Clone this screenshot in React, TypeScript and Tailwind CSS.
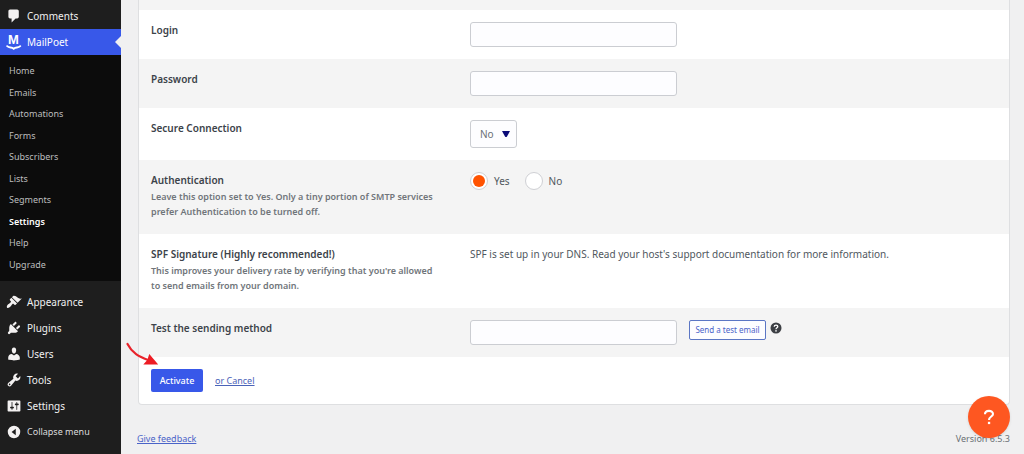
import type { ReactNode } from "react";

const icons = {
  comments:
    "M5 2h9c1.1 0 2 .9 2 2v7c0 1.1-.9 2-2 2h-2l-5 5v-5H5c-1.1 0-2-.9-2-2V4c0-1.1.9-2 2-2z",
  appearance:
    "M14.48 11.06L7.41 3.99l1.5-1.5c.5-.56 2.3-.47 3.51.32 1.21.8 1.43 1.28 2.91 2.1 1.18.64 2.45 1.26 4.45.85zm-.71.71L6.7 4.7 4.93 6.47c-.39.39-.39 1.02 0 1.41l1.06 1.06c.39.39.39 1.03 0 1.42-.6.6-1.43 1.11-2.21 1.69-.35.26-.7.53-1.01.84C1.43 14.23.4 16.08 1.4 17.07c.99 1 2.84-.03 4.18-1.36.31-.31.58-.66.85-1.02.57-.78 1.08-1.61 1.69-2.21.39-.39 1.02-.39 1.41 0l1.06 1.06c.39.39 1.02.39 1.41 0z",
  plugins:
    "M13.11 4.36L9.87 7.6 8 5.73l3.24-3.24c.35-.34 1.05-.2 1.56.32.52.51.66 1.21.31 1.55zm-8 1.77l.91-1.12 9.01 9.01-1.19.84c-.71.71-2.63 1.16-3.82 1.16H6.14L4.9 17.26c-.59.59-1.54.59-2.12 0-.59-.58-.59-1.53 0-2.12l1.24-1.24v-3.88c0-1.13.4-3.19 1.09-3.89zm7.26 3.97l3.24-3.24c.34-.35 1.04-.21 1.55.31.52.51.66 1.21.31 1.55l-3.24 3.25z",
  users:
    "M10 9.25c-2.27 0-2.73-3.44-2.73-3.44C7 4.02 7.82 2 9.97 2c2.16 0 2.98 2.02 2.71 3.81 0 0-.41 3.44-2.68 3.44zm0 2.57L12.72 10c2.39 0 4.52 2.33 4.52 4.53v2.49s-3.65 1.13-7.24 1.13c-3.65 0-7.24-1.13-7.24-1.13v-2.49c0-2.25 1.94-4.48 4.47-4.48z",
  tools:
    "M16.68 9.77c-1.34 1.34-3.3 1.67-4.95.99l-5.41 6.52c-.99.99-2.59.99-3.58 0s-.99-2.59 0-3.57l6.52-5.42c-.68-1.65-.35-3.61.99-4.95 1.28-1.28 3.12-1.62 4.72-1.06l-2.89 2.89 2.82 2.82 2.86-2.87c.53 1.58.18 3.39-1.08 4.65zM3.81 16.21c.4.39 1.04.39 1.43 0 .4-.4.4-1.04 0-1.43-.39-.4-1.03-.4-1.43 0-.39.39-.39 1.03 0 1.43z",
  settings:
    "M18 16V4c0-.55-.45-1-1-1H3c-.55 0-1 .45-1 1v12c0 .55.45 1 1 1h14c.55 0 1-.45 1-1zM8 11h1c.55 0 1 .45 1 1s-.45 1-1 1H8v1.5c0 .28-.22.5-.5.5s-.5-.22-.5-.5V13H6c-.55 0-1-.45-1-1s.45-1 1-1h1V5.5c0-.28.22-.5.5-.5s.5.22.5.5V11zm5-2h-1c-.55 0-1-.45-1-1s.45-1 1-1h1V5.5c0-.28.22-.5.5-.5s.5.22.5.5V7h1c.55 0 1 .45 1 1s-.45 1-1 1h-1v5.5c0 .28-.22.5-.5.5s-.5-.22-.5-.5V9z",
  collapse:
    "M10 2.2a7.8 7.8 0 1 0 0 15.6 7.8 7.8 0 0 0 0-15.6zM12.2 5.8v8.4L7 10z",
};

const lowerMenu: { label: string; icon: keyof typeof icons }[] = [
  { label: "Appearance", icon: "appearance" },
  { label: "Plugins", icon: "plugins" },
  { label: "Users", icon: "users" },
  { label: "Tools", icon: "tools" },
  { label: "Settings", icon: "settings" },
];

const submenu = [
  "Home",
  "Emails",
  "Automations",
  "Forms",
  "Subscribers",
  "Lists",
  "Segments",
  "Settings",
  "Help",
  "Upgrade",
];

function MenuIcon({ name }: { name: keyof typeof icons }) {
  return (
    <svg viewBox="0 0 20 20" className="size-4 shrink-0 fill-[#f3f1f1]" fillRule="evenodd" aria-hidden="true">
      <path d={icons[name]} />
    </svg>
  );
}

const menuRow = "flex h-[26px] w-full items-center gap-[5px] pl-[6px] text-[#f0f0f1]";

function Sidebar() {
  return (
    <nav className="w-[121px] shrink-0 bg-[#1e1e1e] pt-[3px] text-[10px]">
      <a href="#comments" className={menuRow}>
        <MenuIcon name="comments" />
        Comments
      </a>
      <a href="#mailpoet" className="relative flex h-[26px] items-center gap-[5px] bg-[#3858e9] pl-[6px] text-white">
        <svg viewBox="0 0 16 20" className="h-5 w-4 shrink-0" aria-hidden="true">
          <text x="7.5" y="11.7" textAnchor="middle" fontFamily="Liberation Sans, sans-serif" fontWeight="700" fontSize="13" fill="#fff">
            M
          </text>
          <path d="M1.2 14.2C3.4 16.4 5.5 14.6 7.7 16.7C10 14.6 12 16.4 14.2 14.2" fill="none" stroke="#fff" strokeWidth="1.9" strokeLinecap="round" />
        </svg>
        MailPoet
        <span className="absolute top-[7px] right-0 border-y-6 border-r-6 border-y-transparent border-r-[#f0f0f1]" />
      </a>
      <div className="flex h-[226px] flex-col bg-[#0c0c0c] pt-[5px] pb-[6px] pl-[9px] text-[9px] text-[#bcbdbe]">
        {submenu.map((item) => (
          <a
            key={item}
            href={`#${item.toLowerCase()}`}
            className={item === "Settings" ? "flex flex-1 items-center font-semibold text-white" : "flex flex-1 items-center"}
          >
            {item}
          </a>
        ))}
      </div>
      <div className="pt-2">
        {lowerMenu.map(({ label, icon }) => (
          <a key={label} href={`#menu-${icon}`} className={menuRow}>
            <MenuIcon name={icon} />
            {label}
          </a>
        ))}
        <button type="button" className="flex h-[26px] w-full items-center gap-[5px] pl-[6px] text-[9px] text-[#dcdcdd]">
          <MenuIcon name="collapse" />
          Collapse menu
        </button>
      </div>
    </nav>
  );
}

type RowProps = { label: string; htmlFor?: string; help?: string; shaded?: boolean; children: ReactNode };

function Row({ label, htmlFor, help, shaded, children }: RowProps) {
  return (
    <div className={shaded ? "flex bg-[#f4f4f4] px-3 py-3" : "flex bg-white px-3 py-3"}>
      <div className="w-[319px] shrink-0 pr-7">
        {htmlFor ? (
          <label htmlFor={htmlFor} className="block text-[10px] leading-4 font-semibold text-[#3c434a]">
            {label}
          </label>
        ) : (
          <h3 className="text-[10px] leading-4 font-semibold text-[#3c434a]">{label}</h3>
        )}
        {help && <p className="pt-px pb-[3px] text-[9px] leading-[15px] font-semibold text-[#70757a]">{help}</p>}
      </div>
      <div className="flex min-w-0 flex-1 items-start">{children}</div>
    </div>
  );
}

function TextBox({ id, type = "text" }: { id: string; type?: string }) {
  return (
    <input id={id} type={type} className="h-[25px] w-[207px] rounded-[3px] border border-[#cbcdd2] bg-[#fdfdff] px-2 text-[10px]" />
  );
}

function Radio({ label, checked }: { label: string; checked?: boolean }) {
  return (
    <label className="flex items-center gap-[6px]">
      <input
        type="radio"
        name="authentication"
        defaultChecked={checked}
        className="grid size-[18px] appearance-none place-items-center rounded-full border border-[#cfd0d4] bg-white before:size-3 before:rounded-full checked:before:bg-[#ff5301]"
      />
      {label}
    </label>
  );
}

export default function App() {
  return (
    <div className="flex min-h-screen bg-[#f0f0f1] font-['Noto_Sans',sans-serif] text-[10px] text-[#50575e]">
      <Sidebar />
      <main className="relative flex min-w-0 flex-1 flex-col pr-[14px] pl-[17px]">
        <form className="rounded-b-[4px] border border-t-0 border-[#dedfe1] bg-white" onSubmit={(e) => e.preventDefault()}>
          <div className="h-[10px] bg-[#f4f4f4]" />
          <Row label="Login" htmlFor="login">
            <TextBox id="login" />
          </Row>
          <Row label="Password" htmlFor="password" shaded>
            <TextBox id="password" type="password" />
          </Row>
          <Row label="Secure Connection" htmlFor="secure">
            <div className="relative">
              <select id="secure" className="h-7 w-[47px] appearance-none rounded-[3px] border border-[#cbcdd2] bg-[#fdfdff] pl-[9px] text-[10px] text-[#6b7075]">
                <option>No</option>
                <option>SSL</option>
                <option>TLS</option>
              </select>
              <svg viewBox="0 0 8 6" className="pointer-events-none absolute top-[11px] right-[7px] h-[6px] w-2 fill-[#0a0a78]" aria-hidden="true">
                <path d="M0 0h8L5 5.5Q4 6.5 3 5.5z" />
              </svg>
            </div>
          </Row>
          <Row
            label="Authentication"
            help="Leave this option set to Yes. Only a tiny portion of SMTP services prefer Authentication to be turned off."
            shaded
          >
            <div role="radiogroup" aria-label="Authentication" className="flex gap-[15px]">
              <Radio label="Yes" checked />
              <Radio label="No" />
            </div>
          </Row>
          <Row
            label="SPF Signature (Highly recommended!)"
            help="This improves your delivery rate by verifying that you're allowed to send emails from your domain."
          >
            <p className="leading-4">
              SPF is set up in your DNS. Read your host's support documentation for more information.
            </p>
          </Row>
          <Row label="Test the sending method" htmlFor="test" shaded>
            <TextBox id="test" type="email" />
            <button type="button" className="ml-3 h-5 w-[77px] rounded-[2px] border border-[#5b76c4] bg-[#fdfdff] text-[8px] whitespace-nowrap text-[#4a63c8]">
              Send a test email
            </button>
            <svg viewBox="0 0 12 12" className="mt-[2px] ml-1 size-3" aria-hidden="true">
              <circle cx="6" cy="6" r="5.5" fill="#3c3f44" />
              <path d="M4.2 4.7C4.2 2.5 7.8 2.6 7.8 4.6C7.8 5.8 6 5.8 6 7.2" fill="none" stroke="#fff" strokeWidth="1.3" />
              <circle cx="6" cy="8.9" r=".8" fill="#fff" />
            </svg>
          </Row>
          <div className="flex items-center gap-3 px-3 pt-3 pb-3">
            <button type="submit" className="h-[23px] w-[52px] rounded-[2px] bg-[#3858e9] text-[9px] font-medium text-white">
              Activate
            </button>
            <a href="#cancel" className="text-[9px] text-[#4a63b8] underline">
              or Cancel
            </a>
          </div>
        </form>
        <svg viewBox="0 0 36 28" className="pointer-events-none absolute top-[341px] left-[4px] h-7 w-9" aria-hidden="true">
          <path d="M2.5 3C7 12 14 15.5 23 19" fill="none" stroke="#e8232b" strokeWidth="2.2" strokeLinecap="round" />
          <path d="M24.3 13L33.2 23.5L18.3 23.5L22.3 19z" fill="#ed1c24" />
        </svg>
        <footer className="-ml-px flex items-center justify-between pt-[26px] text-[9px] leading-4">
          <a href="#feedback" className="text-[#4a63c8] underline">
            Give feedback
          </a>
          <span className="text-[#6b7075]">Version 6.5.3</span>
        </footer>
      </main>
      <button
        type="button"
        aria-label="Help"
        className="fixed right-[14px] bottom-4 grid size-[42px] place-items-center rounded-full bg-[#fe5721] shadow-sm"
      >
        <svg viewBox="0 0 12 16" className="h-4 w-3" aria-hidden="true">
          <path d="M2 5.2C2 .8 10 .8 10 5C10 7.5 6 7.6 6 11" fill="none" stroke="#fff" strokeWidth="2.1" />
          <rect x="4.9" y="12.8" width="2.3" height="2.3" fill="#fff" />
        </svg>
      </button>
    </div>
  );
}
